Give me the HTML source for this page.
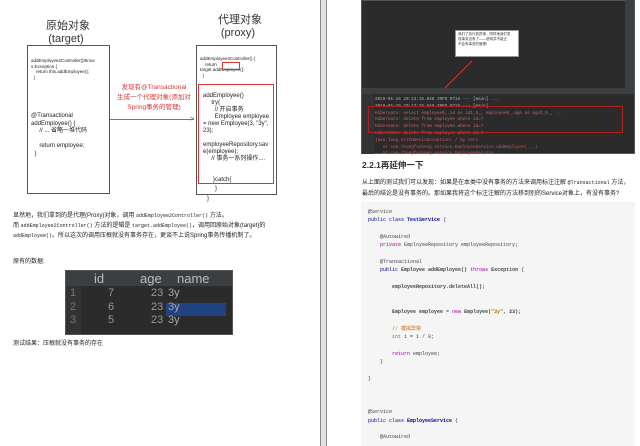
<!DOCTYPE html>
<html><head><meta charset="utf-8"><style>
*{margin:0;padding:0;box-sizing:border-box}
body{width:640px;height:446px;overflow:hidden;background:#fff;position:relative;font-family:"Liberation Sans","Noto Sans CJK SC",sans-serif;color:#222}
.a{position:absolute;white-space:nowrap}
.s{font-size:6px;line-height:7.5px}
.m{font-family:"Liberation Mono",monospace}
</style></head><body>
<div class="a" style="left:320px;top:0;width:7px;height:446px;background:#e2e2e2;border-left:1px solid #888;border-right:1px solid #888"></div>

<!-- left diagram -->
<div class="a" style="left:46px;top:20px;font-size:11px;line-height:13px;text-align:center;width:40px;color:#333">原始对象<br>(target)</div>
<div class="a" style="left:218px;top:14px;font-size:11px;line-height:13px;text-align:center;width:40px;color:#333">代理对象<br>(proxy)</div>
<div class="a" style="left:27px;top:45px;width:83px;height:149px;border:1px solid #555"></div>
<div class="a s" style="left:31px;top:58px;font-size:4.5px;line-height:5.5px">addEmployee2Controller()throw<br>s Exception {<br>&nbsp;&nbsp;&nbsp;&nbsp;return this.addEmployee();<br>&nbsp;&nbsp;}</div>
<div class="a s" style="left:31px;top:113px">@Transactional<br>addEmployee() {<br>&nbsp;&nbsp;&nbsp;&nbsp;&nbsp;// ... 省略一堆代码<br><br>&nbsp;&nbsp;&nbsp;&nbsp;&nbsp;return employee;<br>&nbsp;&nbsp;}</div>
<div class="a" style="left:110px;top:119px;width:84px;height:1px;background:#777"></div>
<div class="a" style="left:190px;top:116px;font-size:7px;line-height:7px;color:#555">&gt;</div>
<div class="a" style="left:114px;top:83px;width:80px;text-align:center;font-size:6.5px;line-height:10px;color:#d33">发现有@Transactional<br>生成一个代理对象(添加对<br>Spring事务的管理)</div>
<div class="a" style="left:196px;top:45px;width:81px;height:150px;border:1px solid #555"></div>
<div class="a s" style="left:200px;top:56px;font-size:4.5px;line-height:5.5px">addEmployee2Controller() {<br>&nbsp;&nbsp;&nbsp;&nbsp;return<br>target.addEmployee();<br>&nbsp;&nbsp;}</div>
<div class="a" style="left:222px;top:62px;width:18px;height:8px;border:1px solid #d33"></div>
<div class="a" style="left:198px;top:84px;width:76px;height:100px;border:1px solid #d33"></div>
<div class="a s" style="left:203px;top:93px;line-height:7px">addEmployee()<br>&nbsp;&nbsp;&nbsp;&nbsp;&nbsp;try{<br>&nbsp;&nbsp;&nbsp;&nbsp;&nbsp;&nbsp;&nbsp;// 开启事务<br>&nbsp;&nbsp;&nbsp;&nbsp;&nbsp;&nbsp;&nbsp;Employee employee<br>= new Employee(3, "3y",<br>23);<br><br>employeeRepository.sav<br>e(employee);<br>&nbsp;&nbsp;&nbsp;&nbsp;&nbsp;// 事务一系列操作....<br><br><br>&nbsp;&nbsp;&nbsp;&nbsp;&nbsp;&nbsp;}catch{</div>
<div class="a s" style="left:215px;top:186px">}</div>
<div class="a s" style="left:207px;top:196px">}</div>

<div class="a s" style="left:13px;top:211px;line-height:10px">显然地，我们拿到的是代理(Proxy)对象，调用 <span class="m" style="font-size:5px">addEmployee2Controller()</span> 方法。<br>而 <span class="m" style="font-size:5px">addEmployee2Controller()</span> 方法的逻辑是 <span class="m" style="font-size:5px">target.addEmployee()</span>，调用回原始对象(target)的<br><span class="m" style="font-size:5px">addEmployee()</span>。所以这次的调用压根就没有事务存在，更谈不上说Spring事务传播机制了。</div>
<div class="a s" style="left:13px;top:259px">原有的数据:</div>
<div class="a" style="left:65px;top:270px;width:168px;height:65px;background:#2b2b2b;border:1px solid #555"></div>
<div class="a" style="left:66px;top:271px;width:166px;height:15px;background:#3c3f41"></div>
<div class="a" style="left:66px;top:286px;width:15px;height:48px;background:#313335"></div>
<div class="a" style="left:166px;top:303px;width:60px;height:13px;background:#214283"></div>
<div class="a" style="left:94px;top:271px;font-size:13px;line-height:15px;color:#bbb">id</div>
<div class="a" style="left:140px;top:271px;font-size:13px;line-height:15px;color:#bbb">age</div>
<div class="a" style="left:177px;top:271px;font-size:13px;line-height:15px;color:#bbb">name</div>
<div class="a" style="left:70px;top:287px;font-size:11px;line-height:13.5px;color:#777">1<br>2<br>3</div>
<div class="a" style="left:108px;top:287px;font-size:11px;line-height:13.5px;color:#999">7<br>6<br>5</div>
<div class="a" style="left:151px;top:287px;font-size:11px;line-height:13.5px;color:#999">23<br>23<br>23</div>
<div class="a" style="left:168px;top:287px;font-size:11px;line-height:13.5px;color:#aaa">3y<br>3y<br>3y</div>
<div class="a s" style="left:13px;top:341px">测试结果：压根就没有事务的存在</div>

<!-- right -->
<div class="a" style="left:361px;top:0;width:274px;height:154px;background:#2b2b2b;border:1px solid #555"></div>
<div class="a" style="left:362px;top:88px;width:272px;height:6px;background:#3c3f41"></div>
<div class="a" style="left:362px;top:94px;width:12px;height:60px;background:#313335"></div>
<div class="a" style="left:625px;top:0;width:9px;height:88px;background:#3c3f41"></div>
<div class="a" style="left:455px;top:30px;width:64px;height:27px;background:#fff;border:1px solid #999"></div>
<div class="a" style="left:458px;top:32px;font-size:3.5px;line-height:5px;color:#333">我们了执行到异常，同样地我们发<br>现事务没有了——说明并不能正<br>不会有事务的管理!</div>
<svg class="a" style="left:440px;top:58px" width="40" height="34"><line x1="32" y1="3" x2="5" y2="30" stroke="#c33" stroke-width="1.2"/></svg>
<div class="a m" style="left:375px;top:97px;font-size:4.3px;line-height:6.8px;color:#a9b7c6">2019-01-26 20:13:15.846 INFO 9716 --- [main] ...<br>2019-01-26 20:13:15.848 INFO 9716 --- [main] ...<br><span style="color:#c66">Hibernate: select employee0_.id as id1_0_, employee0_.age as age2_0_, ...</span><br><span style="color:#c66">Hibernate: delete from employee where id=?</span><br><span style="color:#c66">Hibernate: delete from employee where id=?</span><br><span style="color:#c66">Hibernate: delete from employee where id=?</span><br><span style="color:#d55">java.lang.ArithmeticException: / by zero</span><br><span style="color:#c55">&nbsp;&nbsp;&nbsp;at com.zhongfucheng.service.EmployeeService.addEmployee(...)</span><br><span style="color:#c55">&nbsp;&nbsp;&nbsp;at com.zhongfucheng.service.EmployeeService...</span></div>
<div class="a" style="left:368px;top:106px;width:255px;height:27px;border:1px solid #a22"></div>

<div class="a" style="left:362px;top:159px;font-size:8.5px;font-weight:bold;color:#333">2.2.1再延伸一下</div>
<div class="a s" style="left:362px;top:178px;line-height:11px">从上面的测试我们可以发现：如果是在本类中没有事务的方法来调用标注注解 <span class="m" style="font-size:5px">@Transactional</span> 方法，<br>最后的结论是没有事务的。那如果我将这个标注注解的方法移到别的Service对象上，有没有事务?</div>
<div class="a" style="left:361px;top:202px;width:274px;height:244px;background:#f5f5f5"></div>
<div class="a m" style="left:368px;top:208px;font-size:5px;line-height:8.35px;color:#444">@Service<br><span style="color:#009">public class</span> <b style="color:#009">TestService</b> {<br><br>&nbsp;&nbsp;&nbsp;&nbsp;@Autowired<br>&nbsp;&nbsp;&nbsp;&nbsp;<span style="color:#909">private</span> EmployeeRepository employeeRepository;<br><br>&nbsp;&nbsp;&nbsp;&nbsp;@Transactional<br>&nbsp;&nbsp;&nbsp;&nbsp;<span style="color:#009">public</span> <b>Employee addEmployee()</b> <span style="color:#909">throws</span> <b>Exception</b> {<br><br>&nbsp;&nbsp;&nbsp;&nbsp;&nbsp;&nbsp;&nbsp;&nbsp;<b>employeeRepository.deleteAll();</b><br><br><br>&nbsp;&nbsp;&nbsp;&nbsp;&nbsp;&nbsp;&nbsp;&nbsp;<b>Employee employee</b> = <span style="color:#909">new</span> <b>Employee(<span style="color:#c60">"3y"</span>, 23);</b><br><br>&nbsp;&nbsp;&nbsp;&nbsp;&nbsp;&nbsp;&nbsp;&nbsp;<span style="color:#c60">// 模拟异常</span><br>&nbsp;&nbsp;&nbsp;&nbsp;&nbsp;&nbsp;&nbsp;&nbsp;<span style="color:#099">int</span> i = 1 / 0;<br><br>&nbsp;&nbsp;&nbsp;&nbsp;&nbsp;&nbsp;&nbsp;&nbsp;<span style="color:#909">return</span> employee;<br>&nbsp;&nbsp;&nbsp;&nbsp;}<br><br>}<br><br><br><br>@Service<br><span style="color:#009">public class</span> <b style="color:#009">EmployeeService</b> {<br><br>&nbsp;&nbsp;&nbsp;&nbsp;@Autowired</div>
</body></html>
